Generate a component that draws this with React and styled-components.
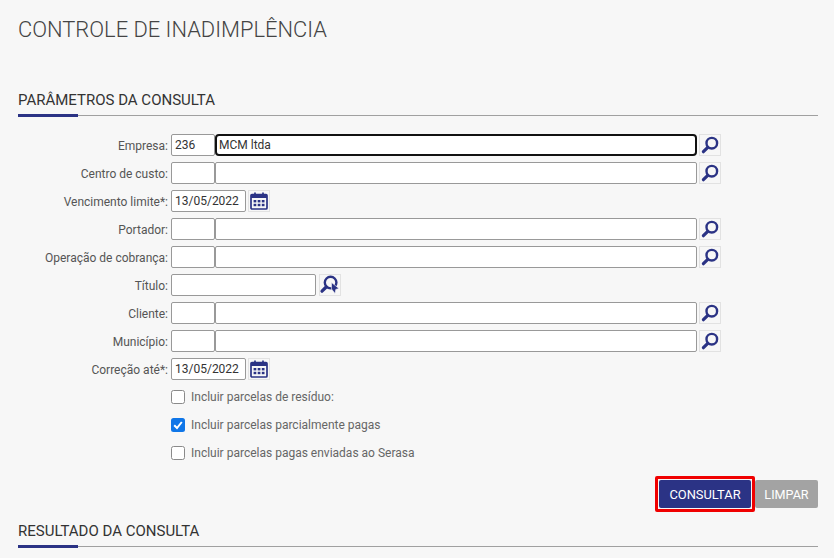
import styled, { createGlobalStyle } from "styled-components";

const BLUE = "#2b3385";

const GlobalStyle = createGlobalStyle`
  * { box-sizing: border-box; }
  html, body { margin: 0; background: #f7f7f7; }
  body { font-family: Roboto, "Liberation Sans", sans-serif; overflow: hidden; }
`;

function SearchIcon() {
  return (
    <svg width="22" height="22" viewBox="0 0 22 22" fill="none">
      <circle cx="12.8" cy="9.2" r="5.3" stroke={BLUE} strokeWidth="2.4" />
      <path d="M8.8 13.3L4.4 17.7" stroke={BLUE} strokeWidth="3.2" strokeLinecap="round" />
    </svg>
  );
}

function SearchPlusIcon() {
  return (
    <svg width="22" height="22" viewBox="0 0 22 22" fill="none">
      <circle cx="11.6" cy="8.6" r="5.8" stroke={BLUE} strokeWidth="2.4" />
      <path d="M7.2 13L3 17.2" stroke={BLUE} strokeWidth="3.2" strokeLinecap="round" />
      <path d="M12.5 8.5L20 14.5L16.8 15.4L16 19.5L12.5 15Z" fill={BLUE} stroke="#f7f7f7" strokeWidth="0.6" />
    </svg>
  );
}

function CalendarIcon() {
  return (
    <svg width="18" height="18" viewBox="0 0 18 18" fill="none">
      <rect x="1" y="2.5" width="16" height="14.5" rx="1" stroke={BLUE} strokeWidth="1.7" />
      <rect x="1" y="2.5" width="16" height="3.5" fill={BLUE} />
      <path d="M5 0.5V3.5M13 0.5V3.5" stroke={BLUE} strokeWidth="1.7" />
      <g fill={BLUE}>
        <rect x="3.6" y="8" width="2.7" height="2.4" />
        <rect x="7.7" y="8" width="2.7" height="2.4" />
        <rect x="11.8" y="8" width="2.7" height="2.4" />
        <rect x="3.6" y="11.8" width="2.7" height="2.4" />
        <rect x="7.7" y="11.8" width="2.7" height="2.4" />
        <rect x="11.8" y="11.8" width="2.7" height="2.4" />
      </g>
    </svg>
  );
}

function LookupRow({ label, code, name, focused }) {
  return (
    <Row>
      <Label>{label}</Label>
      <CodeInput defaultValue={code} />
      <NameInput defaultValue={name} $focused={focused} />
      <IconButton><SearchIcon /></IconButton>
    </Row>
  );
}

function DateRow({ label, value }) {
  return (
    <Row>
      <Label>{label}</Label>
      <DateInput defaultValue={value} />
      <IconButton><CalendarIcon /></IconButton>
    </Row>
  );
}

export default function App() {
  return (
    <Page>
      <GlobalStyle />
      <PageTitle>CONTROLE DE INADIMPLÊNCIA</PageTitle>

      <SectionHeader>
        <SectionTitle>PARÂMETROS DA CONSULTA</SectionTitle>
      </SectionHeader>

      <Form>
        <LookupRow label="Empresa:" code="236" name="MCM ltda" focused />
        <LookupRow label="Centro de custo:" />
        <DateRow label="Vencimento limite*:" value="13/05/2022" />
        <LookupRow label="Portador:" />
        <LookupRow label="Operação de cobrança:" />
        <Row>
          <Label>Título:</Label>
          <TitleInput />
          <IconButton $gap={3}><SearchPlusIcon /></IconButton>
        </Row>
        <LookupRow label="Cliente:" />
        <LookupRow label="Município:" />
        <DateRow label="Correção até*:" value="13/05/2022" />
        <CheckRow>
          <Box />
          Incluir parcelas de resíduo:
        </CheckRow>
        <CheckRow>
          <Box $checked>
            <svg width="10" height="10" viewBox="0 0 10 10" fill="none">
              <path d="M1.2 5.2L4 8L8.8 2" stroke="#fff" strokeWidth="2" />
            </svg>
          </Box>
          Incluir parcelas parcialmente pagas
        </CheckRow>
        <CheckRow>
          <Box />
          Incluir parcelas pagas enviadas ao Serasa
        </CheckRow>
      </Form>

      <Actions>
        <PrimaryButton>CONSULTAR</PrimaryButton>
        <GrayButton>LIMPAR</GrayButton>
      </Actions>

      <SectionHeader $compact>
        <SectionTitle>RESULTADO DA CONSULTA</SectionTitle>
      </SectionHeader>
    </Page>
  );
}

const Page = styled.div`
  width: 834px;
  height: 558px;
  padding: 15px 16px 0 18px;
  overflow: hidden;
`;

const PageTitle = styled.h1`
  margin: 0;
  height: 30px;
  font-size: 21.9px;
  line-height: 30px;
  font-weight: 300;
  color: #444;
`;

const SectionHeader = styled.div`
  margin-top: ${(p) => (p.$compact ? "13px" : "45px")};
  height: 26px;
  border-bottom: 1px solid #a0a0a0;
  position: relative;
  &::after {
    content: "";
    position: absolute;
    left: 0;
    bottom: -2px;
    width: 60px;
    height: 3px;
    background: ${BLUE};
  }
`;

const SectionTitle = styled.h2`
  margin: 0;
  font-size: 15px;
  line-height: 20px;
  font-weight: 400;
  color: #333;
`;

const Form = styled.div`
  margin-top: 18px;
  display: flex;
  flex-direction: column;
  gap: 6px;
`;

const Row = styled.div`
  display: flex;
  align-items: center;
  height: 22px;
`;

const Label = styled.label`
  width: 150px;
  margin-right: 3px;
  padding-top: 1px;
  text-align: right;
  font-size: 12px;
  color: #555;
  white-space: nowrap;
`;

const Input = styled.input`
  height: 22px;
  padding: 0 3px;
  background: #fff;
  border: 1px solid #999;
  border-radius: 2px;
  font-family: inherit;
  font-size: 12px;
  color: #333;
  outline: none;
`;

const CodeInput = styled(Input)`
  width: 44px;
`;

const NameInput = styled(Input)`
  width: 482px;
  ${(p) => p.$focused && "border: 2px solid #111; border-radius: 4px; padding: 0 2px;"}
`;

const DateInput = styled(Input)`
  width: 75px;
`;

const TitleInput = styled(Input)`
  width: 145px;
`;

const IconButton = styled.button`
  width: 22px;
  height: 22px;
  margin-left: ${(p) => p.$gap || 2}px;
  padding: 0;
  display: flex;
  align-items: center;
  justify-content: center;
  background: #f7f7f7;
  border: 1px solid #e2e2e2;
  svg {
    flex: none;
  }
`;

const CheckRow = styled.div`
  display: flex;
  align-items: center;
  gap: 6px;
  height: 22px;
  margin-left: 153px;
  font-size: 12px;
  color: #666;
`;

const Box = styled.span`
  width: 14px;
  height: 14px;
  display: flex;
  align-items: center;
  justify-content: center;
  border-radius: 2.5px;
  background: ${(p) => (p.$checked ? "#0f76e8" : "#fff")};
  border: ${(p) => (p.$checked ? "none" : "1px solid #8a8a8a")};
`;

const Actions = styled.div`
  margin-top: 16px;
  display: flex;
  justify-content: flex-end;
  gap: 4px;
`;

const ActionButton = styled.button`
  height: 28px;
  border: none;
  border-radius: 2px;
  color: #fff;
  font-family: inherit;
  font-size: 12.6px;
  font-weight: 400;
`;

const PrimaryButton = styled(ActionButton)`
  position: relative;
  width: 92px;
  background: ${BLUE};
  font-size: 12.9px;
  &::after {
    content: "";
    position: absolute;
    inset: -4px;
    border: 3px solid #f00000;
    border-radius: 2px;
  }
`;

const GrayButton = styled(ActionButton)`
  width: 63px;
  background: #a3a3a3;
`;
